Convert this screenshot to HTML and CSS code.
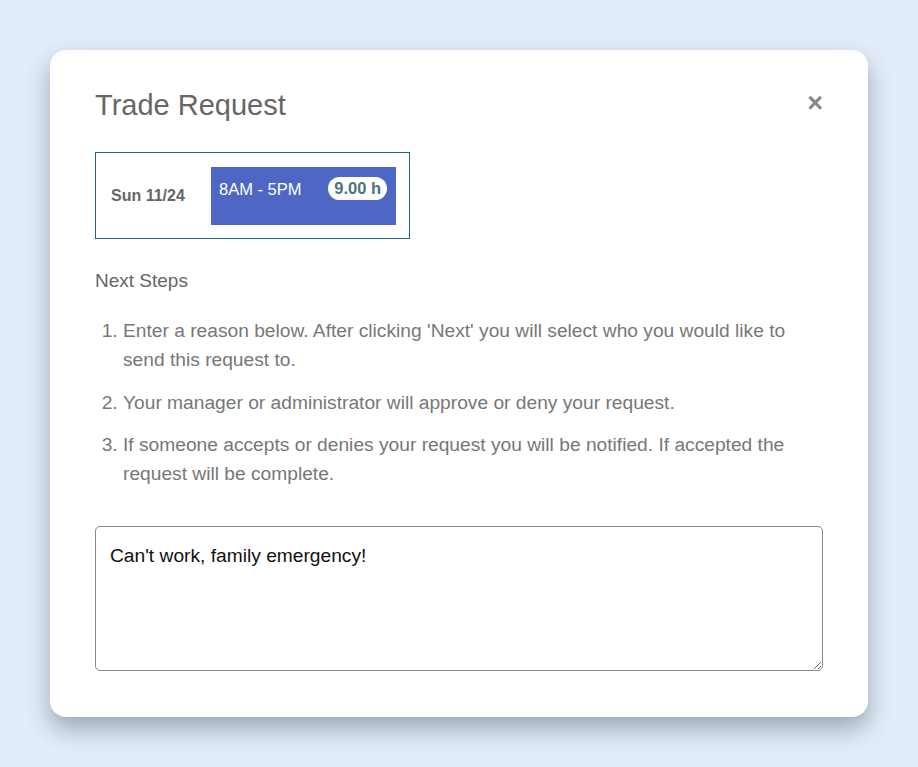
FILE: index.html
```html
<!DOCTYPE html>
<html lang="en">
<head>
    <meta charset="UTF-8">
    <meta name="viewport" content="width=device-width, initial-scale=1.0">
    <title>Trade Request</title>
    <link rel="stylesheet" href="styles.css">
</head>
<body>

<div class="modal">
    <div class="modal-header">
        <h1>Trade Request</h1>
        <span class="close">&times;</span>
    </div>

    <!-- Turno selezionato -->
    <div class="shift">
        <div class="shift-day">Sun 11/24</div>
        <div class="shift-block">
            <span class="shift-time">8AM - 5PM</span>
            <span class="shift-hours">9.00 h</span>
        </div>
    </div>

    <div class="steps-title">Next Steps</div>
    <ol class="steps">
        <li>Enter a reason below. After clicking 'Next' you will select who you would like to send this request to.</li>
        <li>Your manager or administrator will approve or deny your request.</li>
        <li>If someone accepts or denies your request you will be notified. If accepted the request will be complete.</li>
    </ol>

    <textarea class="reason">Can't work, family emergency!</textarea>
</div>

</body>
</html>
```

FILE: styles.css
```css
body {
    font-family: "Liberation Sans", Arial, sans-serif;
    background-color: #e3edf9;
    margin: 0;
    padding: 50px;
}
.modal {
    width: 728px;
    padding: 38px 45px 46px;
    background-color: #fff;
    border-radius: 16px;
    box-shadow: 0 12px 24px rgba(50, 60, 80, 0.4);
}
.modal-header {
    display: flex;
    justify-content: space-between;
    align-items: center;
    height: 34px;
}
h1 {
    margin: 0;
    font-size: 29px;
    line-height: 34px;
    font-weight: normal;
    color: #666;
}
.close {
    font-size: 27px;
    font-weight: bold;
    color: #888;
    line-height: 1;
    margin-top: -3px;
}
.shift {
    display: flex;
    align-items: center;
    width: 285px;
    height: 85px;
    margin-top: 30px;
    padding: 0 13px 0 15px;
    border: 1px solid #1f6584;
}
.shift-day {
    width: 100px;
    font-size: 16px;
    font-weight: bold;
    color: #666;
}
.shift-block {
    display: flex;
    justify-content: space-between;
    align-items: flex-start;
    width: 185px;
    height: 58px;
    padding: 10px 9px 0 8px;
    box-sizing: border-box;
    background-color: #4f67c4;
}
.shift-time {
    font-size: 16.5px;
    color: #fff;
    margin-top: 3px;
}
.shift-hours {
    height: 23px;
    padding: 0 6px;
    box-sizing: border-box;
    border-radius: 12px;
    background-color: #fff;
    color: #4c7383;
    font-size: 16.5px;
    line-height: 23px;
    font-weight: bold;
}
.steps-title {
    margin-top: 31px;
    font-size: 19px;
    line-height: 22px;
    color: #666;
}
.steps {
    margin: 24px 0 0;
    padding-left: 28px;
    font-size: 19.2px;
    line-height: 29px;
    color: #777;
}
.steps li {
    margin-bottom: 13.5px;
}
.steps li:last-child {
    margin-bottom: 0;
}
.reason {
    display: block;
    width: 100%;
    height: 145px;
    margin-top: 38px;
    padding: 18px 14px 14px;
    box-sizing: border-box;
    border: 1px solid #888;
    border-radius: 5px;
    font-family: "Liberation Sans", Arial, sans-serif;
    font-size: 19.2px;
    line-height: 22px;
    color: #111;
    resize: both;
}
```
